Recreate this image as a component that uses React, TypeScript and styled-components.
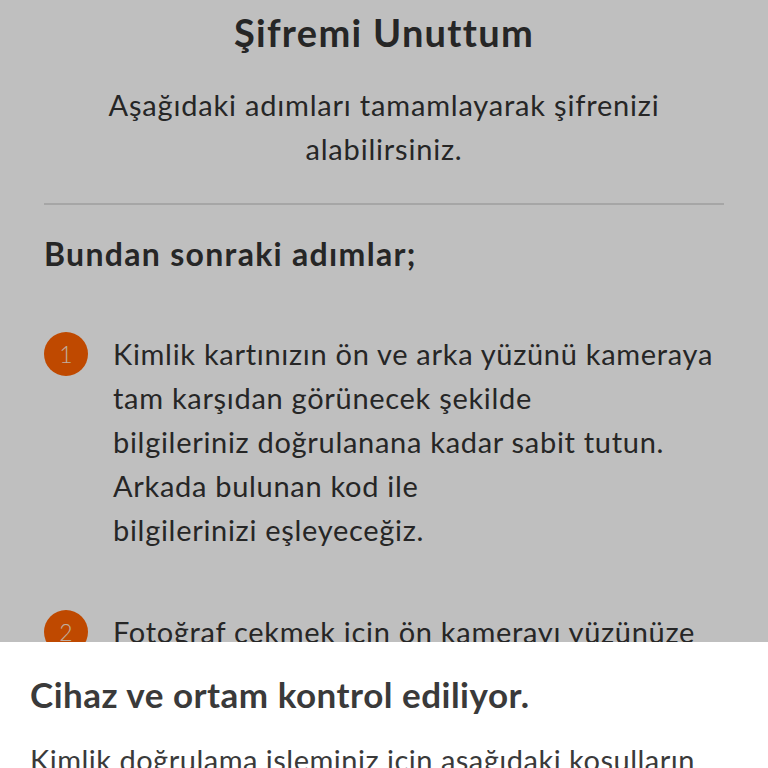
import React from "react";
import styled, { createGlobalStyle } from "styled-components";

const Global = createGlobalStyle`
  html, body { margin: 0; padding: 0; background: #ffffff; }
  body { font-family: Lato, "Noto Sans", sans-serif; color: #333333; overflow: hidden; }
  * { box-sizing: border-box; }
`;

const Page = styled.main`
  width: 768px;
  height: 768px;
  padding: 10px 44px 0;
  display: flex;
  flex-direction: column;
  background: #ffffff;
`;

const Title = styled.h1`
  margin: 0;
  font-size: 38px;
  line-height: 44px;
  letter-spacing: 1.3px;
  font-weight: 700;
  text-align: center;
  color: #333333;
`;

const Subtitle = styled.p`
  margin: 29px -20px 0;
  font-size: 29px;
  line-height: 44px;
  letter-spacing: 0.8px;
  font-weight: 400;
  text-align: center;
  color: #333333;
`;

const Divider = styled.hr`
  margin: 32px 0 0;
  border: 0;
  height: 1.5px;
  background: #dedede;
`;

const SectionHeading = styled.h2`
  margin: 27px 0 0;
  font-size: 32px;
  line-height: 44px;
  letter-spacing: 1.3px;
  font-weight: 700;
  color: #333333;
`;

const Steps = styled.ol`
  margin: 56px 0 0;
  padding: 0;
  list-style: none;
  display: flex;
  flex-direction: column;
  gap: 58px;
`;

const Step = styled.li`
  display: flex;
  align-items: flex-start;
  gap: 25px;
`;

const Badge = styled.span`
  flex: none;
  width: 44px;
  height: 44px;
  border-radius: 50%;
  background: #ff6200;
  color: #ffe8d8;
  font-size: 23px;
  font-weight: 300;
  display: flex;
  align-items: center;
  justify-content: center;
`;

const StepText = styled.p`
  margin: 0;
  font-size: 29px;
  line-height: 44px;
  letter-spacing: 0.7px;
  color: #333333;
  white-space: nowrap;
`;

const Overlay = styled.div`
  position: fixed;
  inset: 0;
  background: rgba(0, 0, 0, 0.25);
`;

const Sheet = styled.section`
  position: fixed;
  top: 642px;
  left: 0;
  right: 0;
  bottom: 0;
  background: #ffffff;
  padding: 30px 30px 0;
`;

const SheetTitle = styled.h3`
  margin: 0;
  font-size: 35px;
  line-height: 44px;
  letter-spacing: 0.5px;
  font-weight: 700;
  color: #3a3a3a;
`;

const SheetText = styled.p`
  margin: 22px 0 0;
  font-size: 29px;
  line-height: 44px;
  letter-spacing: 0.5px;
  color: #3a3a3a;
  white-space: nowrap;
`;

const steps: string[][] = [
  [
    "Kimlik kartınızın ön ve arka yüzünü kameraya",
    "tam karşıdan görünecek şekilde",
    "bilgileriniz doğrulanana kadar sabit tutun.",
    "Arkada bulunan kod ile",
    "bilgilerinizi eşleyeceğiz.",
  ],
  ["Fotoğraf çekmek için ön kamerayı yüzünüze", "tam karşıdan tutun."],
];

export default function App() {
  return (
    <>
      <Global />
      <Page>
        <Title>Şifremi Unuttum</Title>
        <Subtitle>
          Aşağıdaki adımları tamamlayarak şifrenizi
          <br />
          alabilirsiniz.
        </Subtitle>
        <Divider />
        <SectionHeading>Bundan sonraki adımlar;</SectionHeading>
        <Steps>
          {steps.map((lines, i) => (
            <Step key={i}>
              <Badge>{i + 1}</Badge>
              <StepText>
                {lines.map((l, j) => (
                  <React.Fragment key={j}>
                    {l}
                    {j < lines.length - 1 && <br />}
                  </React.Fragment>
                ))}
              </StepText>
            </Step>
          ))}
        </Steps>
      </Page>
      <Overlay />
      <Sheet>
        <SheetTitle>Cihaz ve ortam kontrol ediliyor.</SheetTitle>
        <SheetText>Kimlik doğrulama işleminiz için aşağıdaki koşulların</SheetText>
      </Sheet>
    </>
  );
}
